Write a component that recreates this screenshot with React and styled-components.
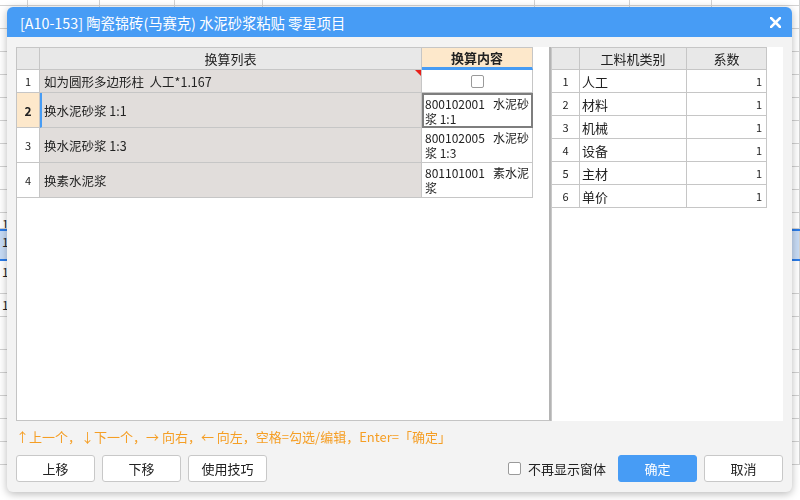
import React from "react";
import styled, { createGlobalStyle } from "styled-components";

const Global = createGlobalStyle`
  html, body { margin: 0; padding: 0; background: #fff; }
  body { font-family: "Noto Sans CJK SC", "Noto Sans", sans-serif; font-size: 12px; color: #222; overflow: hidden; }
  * { box-sizing: border-box; }
`;

const FONT = `"Noto Sans CJK SC", "Noto Sans", sans-serif`;

/* ---------- backdrop spreadsheet ---------- */
const Backdrop = styled.div`
  width: 800px;
  height: 500px;
  overflow: hidden;
  display: flex;
  flex-direction: column;
  background: #fff;
`;
const BRow = styled.div`
  display: grid;
  grid-template-columns: 28px 72px 75px 88px 272px 95px 82px 88px;
  height: ${(p) => p.h || 23}px;
  background: ${(p) => (p.sel ? "#c7dbf5" : "#fff")};
  border-top: ${(p) => (p.sel ? "2px solid #2a7be8" : "none")};
  border-bottom: ${(p) => (p.sel ? "2px solid #2a7be8" : "1px solid #d2d2d2")};
`;
const BCell = styled.div`
  border-right: 1px solid #d2d2d2;
  font-size: 12px;
  line-height: 22px;
  padding: 0 2px;
  overflow: hidden;
  white-space: nowrap;
`;

/* ---------- dialog ---------- */
const Dialog = styled.div`
  position: fixed;
  left: 7px;
  top: 7px;
  width: 785px;
  height: 485px;
  background: #f3f3f3;
  border-radius: 6px;
  box-shadow: 0 2px 8px rgba(0, 0, 0, 0.28);
  display: flex;
  flex-direction: column;
  overflow: hidden;
  font-family: ${FONT};
`;
const TitleBar = styled.div`
  height: 30px;
  flex: none;
  background: #479cf5;
  color: #fff;
  display: flex;
  align-items: center;
  justify-content: space-between;
  padding: 0 11px 0 13px;
  font-size: 14.3px;
`;
const CloseBtn = styled.div`
  width: 12px;
  height: 12px;
  display: flex;
  align-items: center;
  justify-content: center;
`;
const Body = styled.div`
  flex: 1;
  display: flex;
  flex-direction: column;
  padding: 10px 9px 10px 9px;
`;
const Panels = styled.div`
  display: flex;
  height: 374px;
  flex: none;
`;
const LeftPanel = styled.div`
  width: 535px;
  background: #fff;
  border: 1px solid #c4c4c4;
  border-right: 2px solid #b4b4b4;
  border-top: none;
  display: flex;
  flex-direction: column;
`;
const RightPanel = styled.div`
  flex: 1;
  background: #fff;
  border-left: 1px solid #c8c8c8;
  display: flex;
  flex-direction: column;
`;
const Grid = styled.div`
  display: grid;
  grid-template-columns: ${(p) => p.cols};
  width: max-content;
`;
const Head = styled.div`
  height: 23px;
  background: ${(p) => (p.accent ? "#fde8cb" : "#e8e8e8")};
  border-right: 1px solid #c6c6c6;
  border-bottom: ${(p) => (p.accent ? "3px solid #479cf5" : "1px solid #c6c6c6")};
  border-top: 1px solid #c6c6c6;
  font-weight: ${(p) => (p.accent ? 700 : 400)};
  font-size: 13px;
  display: flex;
  align-items: center;
  justify-content: center;
  color: #222;
`;
const NumCell = styled.div`
  height: ${(p) => p.h}px;
  border-right: 1px solid #c6c6c6;
  border-bottom: 1px solid #c6c6c6;
  background: ${(p) => (p.sel ? "#fde8cb" : "#fff")};
  font-weight: ${(p) => (p.sel ? 700 : 400)};
  font-size: ${(p) => (p.sel ? 12 : 11)}px;
  display: flex;
  align-items: center;
  justify-content: center;
  color: #222;
`;
const TextCell = styled.div`
  position: relative;
  height: ${(p) => p.h}px;
  border-right: 1px solid #c6c6c6;
  border-bottom: 1px solid #c6c6c6;
  border-left: ${(p) => (p.sel ? "2px solid #479cf5" : "none")};
  background: ${(p) => p.bg || "#e1dddb"};
  padding: 0 ${(p) => (p.sel ? 2 : 4)}px;
  display: flex;
  align-items: center;
  font-size: 12.5px;
  white-space: pre;
  color: #222;
`;
const Marker = styled.span`
  position: absolute;
  right: 0;
  top: 0;
  width: 0;
  height: 0;
  border-top: 6px solid #e8201a;
  border-left: 6px solid transparent;
`;
const ContentCell = styled.div`
  height: ${(p) => p.h}px;
  border-right: 1px solid #c6c6c6;
  border-bottom: 1px solid #c6c6c6;
  background: #fff;
  outline: ${(p) => (p.sel ? "2px solid #7e7e7e" : "none")};
  outline-offset: -2px;
  padding: ${(p) => (p.sel ? "3px 3px" : "2px 3px")};
  display: flex;
  align-items: ${(p) => (p.center ? "center" : "flex-start")};
  justify-content: ${(p) => (p.center ? "center" : "flex-start")};
  font-size: 12px;
  line-height: 15px;
  white-space: pre;
  color: #222;
`;
const Check = styled.span`
  width: 13px;
  height: 13px;
  border: 1px solid #9a9a9a;
  border-radius: 2px;
  background: #fff;
  display: inline-block;
  flex: none;
`;
const RCell = styled.div`
  height: 23px;
  border-right: 1px solid #c6c6c6;
  border-bottom: 1px solid #c6c6c6;
  display: flex;
  align-items: center;
  justify-content: ${(p) => p.justify || "flex-start"};
  padding: 0 ${(p) => (p.justify === "flex-end" ? 4 : 2)}px;
  font-size: ${(p) => (p.small ? 11 : 13)}px;
  color: #222;
`;
const Hint = styled.div`
  margin-top: 8px;
  height: 16px;
  color: #f59e24;
  font-size: 13px;
  line-height: 16px;
  white-space: nowrap;
`;
const Footer = styled.div`
  margin-top: auto;
  display: flex;
  align-items: center;
  gap: 7px;
`;
const Button = styled.button`
  width: 79px;
  height: 27px;
  border: 1px solid ${(p) => (p.primary ? "#479cf5" : "#c8c8c8")};
  background: ${(p) => (p.primary ? "#479cf5" : "#fff")};
  color: ${(p) => (p.primary ? "#fff" : "#222")};
  border-radius: 3px;
  font-family: ${FONT};
  font-size: 13px;
  padding: 0;
  display: flex;
  align-items: center;
  justify-content: center;
`;
const Spacer = styled.div`
  flex: 1;
`;
const CheckLabel = styled.label`
  display: flex;
  align-items: center;
  gap: 7px;
  font-size: 13px;
  color: #222;
  margin-right: 5px;
`;

const leftRows = [
  { n: 1, h: 23, text: "如为圆形多边形柱  人工*1.167", check: true, marker: true },
  { n: 2, h: 35, text: "换水泥砂浆 1:1", content: "800102001   水泥砂\n浆 1:1", sel: true },
  { n: 3, h: 35, text: "换水泥砂浆 1:3", content: "800102005   水泥砂\n浆 1:3" },
  { n: 4, h: 35, text: "换素水泥浆", content: "801101001   素水泥\n浆" },
];

const rightRows = ["人工", "材料", "机械", "设备", "主材", "单价"];

const bgRows = [
  { h: 6 }, { h: 23 }, { h: 23 }, { h: 23 }, { h: 23 }, { h: 23 }, { h: 23 }, { h: 23 },
  { h: 23 }, { h: 23 }, { h: 16 }, { h: 32, sel: true }, { h: 33 }, { h: 23 }, { h: 33 },
  { h: 23 }, { h: 23 }, { h: 23 }, { h: 23 }, { h: 23 },
];

const marks = { 10: true, 11: true, 12: true, 13: true };

export default function App() {
  return (
    <>
      <Global />
      <Backdrop>
        {bgRows.map((r, i) => (
          <BRow key={i} h={r.h} sel={r.sel}>
            {Array.from({ length: 8 }).map((_, j) => (
              <BCell key={j}>{marks[i] && j === 0 ? "1." : marks[i] && j === 7 ? "数" : ""}</BCell>
            ))}
          </BRow>
        ))}
      </Backdrop>

      <Dialog>
        <TitleBar>
          <span>[A10-153] 陶瓷锦砖(马赛克) 水泥砂浆粘贴 零星项目</span>
          <CloseBtn>
            <svg width="11" height="11" viewBox="0 0 11 11">
              <path d="M1 1 L10 10 M10 1 L1 10" stroke="#fff" strokeWidth="2.6" strokeLinecap="square" />
            </svg>
          </CloseBtn>
        </TitleBar>
        <Body>
          <Panels>
            <LeftPanel>
              <Grid cols="23px 382px 111px">
                <Head />
                <Head>换算列表</Head>
                <Head accent>换算内容</Head>
                {leftRows.map((r) => (
                  <React.Fragment key={r.n}>
                    <NumCell h={r.h} sel={r.sel}>{r.n}</NumCell>
                    <TextCell h={r.h} sel={r.sel}>
                      {r.text}
                      {r.marker && <Marker />}
                    </TextCell>
                    {r.check ? (
                      <ContentCell h={r.h} center>
                        <Check />
                      </ContentCell>
                    ) : (
                      <ContentCell h={r.h} sel={r.sel}>{r.content}</ContentCell>
                    )}
                  </React.Fragment>
                ))}
              </Grid>
            </LeftPanel>
            <RightPanel>
              <Grid cols="28px 107px 80px">
                <Head />
                <Head>工料机类别</Head>
                <Head>系数</Head>
                {rightRows.map((t, i) => (
                  <React.Fragment key={t}>
                    <RCell justify="center" small>{i + 1}</RCell>
                    <RCell>{t}</RCell>
                    <RCell justify="flex-end" small>1</RCell>
                  </React.Fragment>
                ))}
              </Grid>
            </RightPanel>
          </Panels>
          <Hint>↑上一个，↓下一个，→ 向右，← 向左，空格=勾选/编辑，Enter=「确定」</Hint>
          <Footer>
            <Button>上移</Button>
            <Button>下移</Button>
            <Button>使用技巧</Button>
            <Spacer />
            <CheckLabel>
              <Check />
              不再显示窗体
            </CheckLabel>
            <Button primary>确定</Button>
            <Button>取消</Button>
          </Footer>
        </Body>
      </Dialog>
    </>
  );
}
